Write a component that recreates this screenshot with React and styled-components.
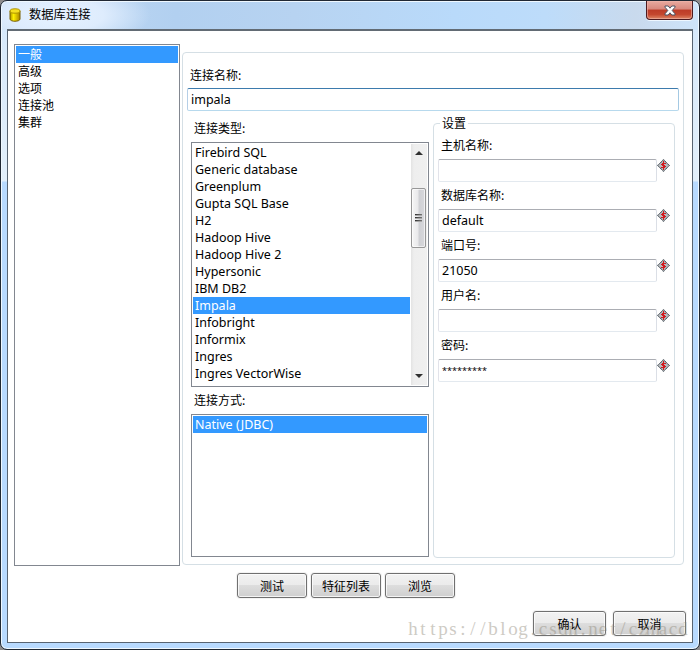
import React from "react";
import styled, { createGlobalStyle, css } from "styled-components";

const GlobalStyle = createGlobalStyle`
  *, *::before, *::after { box-sizing: border-box; }
  body {
    margin: 0;
    overflow: hidden;
    background: #8d8b8c;
    color: #000;
    font-family: "Noto Sans", "Noto Sans CJK SC", sans-serif;
    font-size: 12px;
  }
`;

const cjk = css`
  font-family: "Noto Sans CJK SC", sans-serif;
  font-size: 12px;
  white-space: nowrap;
`;

const Window = styled.main`
  position: relative;
  width: 700px;
  height: 650px;
  padding: 0 6px 6px;
  display: flex;
  flex-direction: column;
  border: 1px solid #202834;
  border-radius: 7px;
  box-shadow: inset 0 0 0 1px #eff8ff;
  background:
    radial-gradient(ellipse 95px 34px at 55px 14px, #e6f2ff 0%, #deecfd 50%, #deecfd00 100%) 0 0 / 100% 29px no-repeat,
    linear-gradient(90deg, #c5dcf4 0, #b2d0f0 25%, #b7d3f1 42%, #b9dafa 65%, #bddcfa 78%, #c9daed 91%, #cee4fa 100%) 0 0 / 100% 29px no-repeat,
    linear-gradient(180deg, #d5e8fb 0, #e2effb 180px, #b8daff 181px, #b8daff 100%);
`;

const TitleBar = styled.header`
  display: flex;
  align-items: flex-start;
  flex: 0 0 28px;
  padding: 7px 0 0 2px;
`;

const Title = styled.h1`
  ${cjk}
  margin: -3px 0 0 8px;
  flex: 1;
  font-size: 12.3px;
  font-weight: 400;
  line-height: 18px;
`;

const CloseButton = styled.button`
  width: 47px;
  height: 19px;
  margin: -7px 0 0;
  padding: 0;
  display: grid;
  place-items: center;
  border: 1px solid #4d1b20;
  border-top: 0;
  border-radius: 0 0 4px 4px;
  background: linear-gradient(#e8aaa0 0, #d8887d 45%, #bd3b27 50%, #c4472f 75%, #de8665 100%);
  box-shadow: inset 0 0 0 1px #f0b6ac99, 0 1px 0 #eef7ff;
`;

const Client = styled.div`
  flex: 1;
  display: flex;
  flex-direction: column;
  border: 1px solid #586472;
  border-top: 2px solid #626b74;
  background: #fff;
`;

const Body = styled.div`
  display: flex;
  align-items: flex-start;
  gap: 2px;
  padding: 13px 8px 0 6px;
`;

const ListBox = styled.ul`
  display: flex;
  flex-direction: column;
  width: ${({ $width }) => $width}px;
  height: ${({ $height }) => $height}px;
  margin: 0;
  padding: 1px;
  list-style: none;
  border: 1px solid #828790;
  background: #fff;
`;

const ListItem = styled.li`
  height: 17px;
  padding-left: 2px;
  font-size: 12.5px;
  line-height: 17px;
  white-space: nowrap;
  ${({ $cjk }) => $cjk && css`${cjk} line-height: 15px;`}
  ${({ $selected }) => $selected && css`background: #3399ff; color: #fff;`}
`;

const Panel = styled.section`
  width: 502px;
  height: 513px;
  margin-top: 8px;
  padding: 14px 4px 0;
  border: 1px solid #d5dfe5;
  border-radius: 4px;
`;

const Label = styled.label`
  ${cjk}
  display: block;
  height: ${({ $height = 17 }) => $height}px;
  padding-left: 3px;
  line-height: 15px;
`;

const Input = styled.input`
  display: block;
  width: ${({ $wide }) => ($wide ? 492 : 219)}px;
  height: 23px;
  padding: 0 3px 1px;
  border: 1px solid #e2e3ea;
  border-color: ${({ $wide }) => ($wide ? "#3d7bad #a4c9e3 #b7d9ed #b5cfe7" : "#abadb3 #dbdfe6 #e3e9ef #e2e3ea")};
  border-radius: 2px;
  outline: 0;
  background: #fff;
  color: #000;
  font: 12.5px "Noto Sans", sans-serif;
  ${({ $masked }) => $masked && css`font-size: 9.1px; padding-bottom: 0;`}
`;

const Columns = styled.div`
  display: flex;
  align-items: flex-start;
  gap: 4px;
  padding: 9px 4px 0 4px;
`;

const Lists = styled.div`
  width: 238px;
`;

const ScrollList = styled.div`
  display: flex;
  justify-content: space-between;
  height: 245px;
  margin-bottom: 5px;
  padding: 1px;
  border: 1px solid #828790;
`;

const ScrollItems = styled.ul`
  width: 217px;
  margin: 0;
  padding: 0;
  list-style: none;
`;

const ScrollBar = styled.div`
  width: 16px;
  display: flex;
  flex-direction: column;
  align-items: flex-start;
  background: linear-gradient(90deg, #e3e3e3, #eee 3px, #f0f0f0);
`;

const Arrow = styled.i`
  margin: ${({ $down }) => ($down ? "auto 0 7px 4px" : "7px 0 0 4px")};
  border: solid transparent;
  border-width: ${({ $down }) => ($down ? "4px 4px 0" : "0 4px 4px")};
  border-${({ $down }) => ($down ? "top" : "bottom")}-color: #303030;
`;

const Thumb = styled.div`
  width: 15px;
  height: 60px;
  margin-top: 33px;
  display: flex;
  flex-direction: column;
  align-items: center;
  justify-content: center;
  gap: 1px;
  border: 1px solid #979797;
  border-radius: 2px;
  background: linear-gradient(90deg, #f6f6f6 0, #e9e9eb 45%, #cfd0d4 55%, #d8d8dc 100%);
  box-shadow: inset 0 0 0 1px #fff9;
`;

const Grip = styled.i`
  width: 7px;
  height: 2px;
  background: linear-gradient(90deg, #303030, #777) 0 0 / 100% 1px no-repeat, #a8a8a8;
`;

const Settings = styled.fieldset`
  min-width: 0;
  width: 242px;
  height: 443px;
  margin: -5px 0 0;
  padding: 5px 0 0 4px;
  border: 1px solid #d5dfe5;
  border-radius: 4px;
`;

const Legend = styled.legend`
  ${cjk}
  height: 17px;
  margin-left: 2px;
  padding: 0 2px;
  line-height: 16px;
`;

const Field = styled.div`
  height: 50px;
`;

const FieldRow = styled.div`
  display: flex;
  align-items: flex-start;
`;

const Button = styled.button`
  ${cjk}
  width: ${({ $width }) => $width}px;
  height: 25px;
  padding: 0 0 1px;
  border: 1px solid #707070;
  border-radius: 3px;
  color: #000;
  background: linear-gradient(#f2f2f2 0, #ebebeb 48%, #dddddd 50%, #cfcfcf 100%);
  box-shadow: inset 0 0 0 1px #fcfcfccc, 0 0 0 1px #f3f3f3;
`;

const Actions = styled.div`
  display: flex;
  justify-content: center;
  gap: 4px;
  padding: 7px 8px 0 0;
`;

const DialogActions = styled.div`
  display: flex;
  justify-content: flex-end;
  gap: 7px;
  padding: 13px 6px 0 0;
`;

const Watermark = styled.span`
  position: absolute;
  left: 407px;
  top: 616px;
  color: #8b8575;
  opacity: 0.42;
  font: 19px/24px "Liberation Serif", serif;
  white-space: nowrap;
  pointer-events: none;
  display: grid;
  grid-template-columns: repeat(28, 10px);
  justify-items: center;
`;

function DatabaseIcon() {
  return (
    <svg width="12" height="14" viewBox="0 0 12 14" aria-hidden="true">
      <defs>
        <linearGradient id="gold">
          <stop stopColor="#ad9300" />
          <stop offset=".35" stopColor="#fff000" />
          <stop offset="1" stopColor="#aa8500" />
        </linearGradient>
      </defs>
      <path d="M1 3v8c0 3 10 3 10 0V3z" fill="url(#gold)" stroke="#765f00" />
      <ellipse cx="6" cy="3" rx="5" ry="2.2" fill="#f6df22" stroke="#ad9300" />
    </svg>
  );
}

function CloseIcon() {
  return (
    <svg width="12" height="11" viewBox="0 0 12 11" aria-hidden="true">
      <path d="M1 1h3.2L6 3.2 7.8 1H11v1.2L8.2 5.5 11 8.8V10H7.8L6 7.8 4.2 10H1V8.8l2.8-3.3L1 2.2z" fill="#fff" stroke="#4b5263" />
    </svg>
  );
}

function VariableIcon() {
  return (
    <svg width="13" height="13" viewBox="0 0 13 13" aria-hidden="true">
      <path d="M6.5.7l5.8 5.8-5.8 5.8L.7 6.5z" fill="#b9bcc0" stroke="#929699" />
      <path d="M6.5.7l5.8 5.8-5.8 5.8L.7 6.5z" fill="none" stroke="#202c37" strokeDasharray="1 1" />
      <path d="M6 2h1v2h2v1H7v1h1v1h1v1H8v1H7v2H6V9H4V8h2V7H5V6H4V5h1V4h1z" fill="#d01c20" />
    </svg>
  );
}

const categories = ["一般", "高级", "选项", "连接池", "集群"];
const types = [
  "Firebird SQL", "Generic database", "Greenplum", "Gupta SQL Base", "H2",
  "Hadoop Hive", "Hadoop Hive 2", "Hypersonic", "IBM DB2", "Impala",
  "Infobright", "Informix", "Ingres", "Ingres VectorWise",
];
const fields = [
  { label: "主机名称:", value: "" },
  { label: "数据库名称:", value: "default" },
  { label: "端口号:", value: "21050" },
  { label: "用户名:", value: "" },
  { label: "密码:", value: "*********", masked: true },
];

export default function App() {
  return (
    <>
      <GlobalStyle />
      <Window>
        <TitleBar>
          <DatabaseIcon />
          <Title>数据库连接</Title>
          <CloseButton aria-label="关闭"><CloseIcon /></CloseButton>
        </TitleBar>
        <Client>
          <Body>
            <ListBox $width={166} $height={522}>
              {categories.map((name, i) => (
                <ListItem key={name} $cjk $selected={i === 0}>{name}</ListItem>
              ))}
            </ListBox>
            <Panel>
              <Label $height={21}>连接名称:</Label>
              <Input $wide defaultValue="impala" />
              <Columns>
                <Lists>
                  <Label $height={22}>连接类型:</Label>
                  <ScrollList>
                    <ScrollItems>
                      {types.map((name) => (
                        <ListItem key={name} $selected={name === "Impala"}>{name}</ListItem>
                      ))}
                    </ScrollItems>
                    <ScrollBar>
                      <Arrow />
                      <Thumb><Grip /><Grip /><Grip /></Thumb>
                      <Arrow $down />
                    </ScrollBar>
                  </ScrollList>
                  <Label $height={22}>连接方式:</Label>
                  <ListBox $width={238} $height={143}>
                    <ListItem $selected>Native (JDBC)</ListItem>
                  </ListBox>
                </Lists>
                <Settings>
                  <Legend>设置</Legend>
                  {fields.map(({ label, value, masked }) => (
                    <Field key={label}>
                      <Label $height={22}>{label}</Label>
                      <FieldRow>
                        <Input defaultValue={value} $masked={masked} />
                        <VariableIcon />
                      </FieldRow>
                    </Field>
                  ))}
                </Settings>
              </Columns>
            </Panel>
          </Body>
          <Actions>
            <Button $width={70}>测试</Button>
            <Button $width={70}>特征列表</Button>
            <Button $width={70}>浏览</Button>
          </Actions>
          <DialogActions>
            <Button $width={73}>确认</Button>
            <Button $width={73}>取消</Button>
          </DialogActions>
        </Client>
        <Watermark>
          {[..."https://blog.csdn.net/czmacd"].map((char, i) => <span key={i}>{char}</span>)}
        </Watermark>
      </Window>
    </>
  );
}
